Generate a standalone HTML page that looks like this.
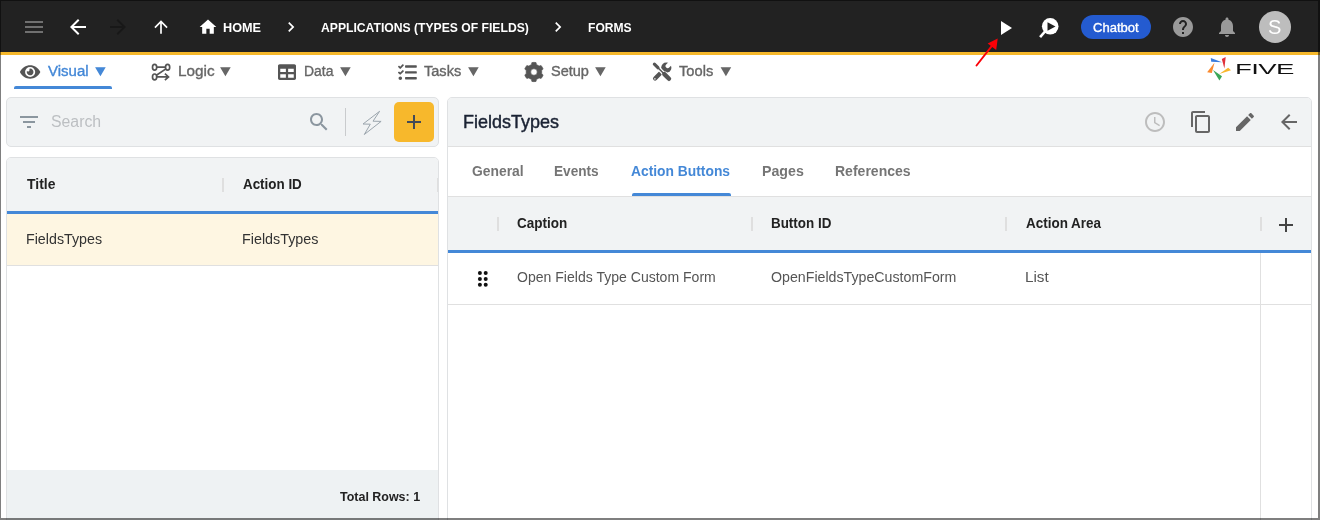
<!DOCTYPE html>
<html lang="en"><head><meta charset="utf-8"><title>Five - Forms</title>
<style>
html,body{margin:0;padding:0;background:#fff;}
body{width:1320px;height:520px;overflow:hidden;font-family:"Liberation Sans",Arial,sans-serif;}
#app{position:relative;width:1320px;height:520px;overflow:hidden;background:#fff;}
#app *{box-sizing:border-box;}
.a{position:absolute;}
.t{position:absolute;line-height:1;white-space:nowrap;transform-origin:0 0;}
svg{position:absolute;overflow:visible;}
#hdr{left:0;top:0;width:1320px;height:52px;background:#222;}
#ybar{left:0;top:52px;width:1320px;height:3px;background:#f6b82b;}
#frame{position:absolute;left:0;top:0;width:1320px;height:520px;border-style:solid;border-color:rgba(0,0,0,.5);border-width:1px 2px 2px 1px;pointer-events:none;}
.tri{position:absolute;line-height:1;font-size:18px;transform-origin:0 100%;transform:scaleY(.86);}
.ul{position:absolute;height:3px;background:#4488d7;border-radius:2px 2px 0 0;}
.panel{position:absolute;background:#f1f3f4;border:1px solid #dfe1e3;}
.sep{position:absolute;width:2px;height:14px;background:#dfdfdf;}
.hl{position:absolute;height:1px;background:#e0e0e0;}
.vl{position:absolute;width:1px;background:#e0e0e0;}
.bl{position:absolute;height:3px;background:#4488d7;}

</style></head>
<body>
<div id="app">
<header>
<div id="hdr" class="a"></div>
<div id="ybar" class="a"></div>

<!-- header icons -->
<svg style="left:22px;top:15px" width="24" height="24" viewBox="0 0 24 24"><path fill="#707070" d="M3 18h18v-2H3v2zm0-5h18v-2H3v2zm0-7v2h18V6H3z"/></svg>
<svg style="left:66px;top:15px" width="24" height="24" viewBox="0 0 24 24"><path fill="#fff" d="M20 11H7.830l5.590-5.590L12 4l-8 8 8 8 1.410-1.410L7.830 13H20v-2z"/></svg>
<svg style="left:106px;top:15px" width="24" height="24" viewBox="0 0 24 24"><path fill="#181818" d="M12 4l-1.410 1.410L16.170 11H4v2h12.170l-5.580 5.590L12 20l8-8z"/></svg>
<svg style="left:151px;top:17px" width="20" height="20" viewBox="0 0 24 24"><path fill="#fff" d="M4 12l1.410 1.410L11 7.830V20h2V7.830l5.580 5.590L20 12l-8-8-8 8z"/></svg>
<svg style="left:198px;top:17px" width="20" height="20" viewBox="0 0 24 24"><path fill="#fff" d="M10 20v-6h4v6h5v-8h3L12 3 2 12h3v8z"/></svg>
<svg style="left:281px;top:17px" width="20" height="20" viewBox="0 0 24 24"><path fill="#fff" d="M10 6L8.590 7.410 13.170 12l-4.580 4.590L10 18l6-6z"/></svg>
<svg style="left:548px;top:17px" width="20" height="20" viewBox="0 0 24 24"><path fill="#fff" d="M10 6L8.590 7.410 13.170 12l-4.580 4.590L10 18l6-6z"/></svg>
<svg style="left:993px;top:16px" width="24" height="24" viewBox="0 0 24 24"><path fill="#fff" d="M8 5v14l11-7z"/></svg>
<!-- preview icon -->
<svg style="left:1036px;top:14px" width="28" height="28" viewBox="0 0 28 28"><path d="M9 17.500L4.100 23.100" stroke="#fff" stroke-width="2.600" stroke-linecap="butt"/><circle cx="14.200" cy="12.300" r="8.300" fill="#fff"/><path d="M11.500 8.300v8.400l8-4.200z" fill="#222"/></svg>
<div class="a" style="left:1081px;top:15px;width:70px;height:24px;border-radius:12px;background:#245bd0;"></div>
<svg style="left:1171px;top:15px" width="24" height="24" viewBox="0 0 24 24"><path fill="#9a9a9a" d="M12 2C6.480 2 2 6.480 2 12s4.480 10 10 10 10-4.480 10-10S17.520 2 12 2zm1 17h-2v-2h2v2zm2.070-7.750l-.9.920C13.450 12.900 13 13.500 13 15h-2v-.5c0-1.100.45-2.100 1.170-2.830l1.240-1.260c.37-.36.590-.86.590-1.410 0-1.100-.9-2-2-2s-2 .9-2 2H8c0-2.210 1.790-4 4-4s4 1.790 4 4c0 .88-.36 1.680-.93 2.250z"/></svg>
<svg style="left:1215px;top:15px" width="24" height="24" viewBox="0 0 24 24"><path fill="#9a9a9a" d="M12 22c1.100 0 2-.9 2-2h-4c0 1.100.89 2 2 2zm6-6v-5c0-3.070-1.640-5.640-4.500-6.320V4c0-.83-.67-1.500-1.500-1.500s-1.500.67-1.500 1.500v.68C7.630 5.360 6 7.920 6 11v5l-2 2v1h16v-1l-2-2z"/></svg>
<div class="a" style="left:1259px;top:11px;width:32px;height:32px;border-radius:16px;background:#bdbdbd;"></div>
<!-- red arrow -->
<svg style="left:960px;top:30px" width="60" height="45" viewBox="960 30 60 45"><path d="M976.500 65.500L992.500 45.200" stroke="#fb0007" stroke-width="1.900" stroke-linecap="round"/><path d="M997.700 38.600L987.700 43.400L996.200 50.100z" fill="#fb0007"/></svg>

<span id="t_home" class="t" style="left:222.71px;top:21.00px;font-size:13px;font-weight:700;color:#fff;transform:scaleX(0.9745);">HOME</span>
<span id="t_app" class="t" style="left:320.91px;top:21.00px;font-size:13px;font-weight:700;color:#fff;transform:scaleX(0.9353);">APPLICATIONS (TYPES OF FIELDS)</span>
<span id="t_forms" class="t" style="left:587.81px;top:21.00px;font-size:13px;font-weight:700;color:#fff;transform:scaleX(0.9303);">FORMS</span>
<span id="t_chat" class="t" style="left:1093.09px;top:20.75px;font-size:13px;font-weight:400;color:#fff;transform:scaleX(1.0026);-webkit-text-stroke:0.35px;">Chatbot</span>
<span id="t_s" class="t" style="left:1268.37px;top:16.86px;font-size:20px;font-weight:400;color:#fff;transform:scaleX(1.0040);">S</span>
</header>
<nav>
<!-- nav icons -->
<svg style="left:20.300px;top:63px" width="20.250" height="18" viewBox="0 0 576 512"><path fill="#555" d="M572.520 241.400C518.290 135.590 410.930 64 288 64S57.680 135.640 3.480 241.410a32.350 32.350 0 0 0 0 29.190C57.710 376.410 165.070 448 288 448s230.320-71.640 284.520-177.410a32.350 32.350 0 0 0 0-29.190zM288 400a144 144 0 1 1 144-144 143.930 143.930 0 0 1-144 144zm0-240a95.310 95.310 0 0 0-25.310 3.790 47.850 47.850 0 0 1-66.900 66.900A95.780 95.780 0 1 0 288 160z"/></svg>
<svg style="left:150px;top:62px" width="22" height="20" viewBox="150 62 22 20" fill="none" stroke="#555" stroke-width="1.700"><ellipse cx="154.600" cy="67.200" rx="2.100" ry="2.900"/><ellipse cx="167.600" cy="67.200" rx="2.100" ry="2.900"/><ellipse cx="154.600" cy="76.900" rx="2.100" ry="2.900"/><path d="M156.700 67.200H165.500M165.900 68.900L156.400 75.300M156.700 76.900H168M164.900 73.700L168.500 76.900L164.900 80.100" stroke-linejoin="miter"/></svg>
<svg style="left:278px;top:63px" width="18" height="18" viewBox="0 0 512 512"><path fill="#555" d="M464 32H48C21.490 32 0 53.490 0 80v352c0 26.510 21.490 48 48 48h416c26.510 0 48-21.490 48-48V80c0-26.510-21.490-48-48-48zM224 416H64v-96h160v96zm0-160H64v-96h160v96zm224 160H288v-96h160v96zm0-160H288v-96h160v96z"/></svg>
<svg style="left:397.700px;top:62.600px" width="18.800" height="18.800" viewBox="0 0 512 512"><path fill="#555" d="M139.610 35.500a12 12 0 0 0-17 0L58.930 98.810l-22.700-22.120a12 12 0 0 0-17 0L3.530 92.410a12 12 0 0 0 0 17l47.590 47.400a12.780 12.780 0 0 0 17.610 0l15.590-15.620L156.520 69a12.090 12.090 0 0 0 .09-17zm0 159.190a12 12 0 0 0-17 0l-63.680 63.720-22.700-22.100a12 12 0 0 0-17 0L3.530 252a12 12 0 0 0 0 17L51 316.500a12.770 12.770 0 0 0 17.600 0l15.700-15.690 72.200-72.220a12 12 0 0 0 .09-16.900zM64 368c-26.490 0-48.590 21.500-48.590 48S37.530 464 64 464a48 48 0 0 0 0-96zm432 16H208a16 16 0 0 0-16 16v32a16 16 0 0 0 16 16h288a16 16 0 0 0 16-16v-32a16 16 0 0 0-16-16zm0-320H208a16 16 0 0 0-16 16v32a16 16 0 0 0 16 16h288a16 16 0 0 0 16-16V80a16 16 0 0 0-16-16zm0 160H208a16 16 0 0 0-16 16v32a16 16 0 0 0 16 16h288a16 16 0 0 0 16-16v-32a16 16 0 0 0-16-16z"/></svg>
<svg style="left:522px;top:60px" width="24" height="24" viewBox="522 60 24 24"><path fill="#555" fill-rule="evenodd" stroke="#555" stroke-width="0.600" stroke-linejoin="round" d="M536.55 64.65L536.04 62.58A9.65 9.65 0 0 0 531.86 62.58L531.35 64.65A7.8 7.8 0 0 0 528.88 66.07L526.84 65.48A9.65 9.65 0 0 0 524.75 69.10L526.28 70.58A7.8 7.8 0 0 0 526.28 73.42L524.75 74.90A9.65 9.65 0 0 0 526.84 78.52L528.88 77.93A7.8 7.8 0 0 0 531.35 79.35L531.86 81.42A9.65 9.65 0 0 0 536.04 81.42L536.55 79.35A7.8 7.8 0 0 0 539.02 77.93L541.06 78.52A9.65 9.65 0 0 0 543.15 74.90L541.62 73.42A7.8 7.8 0 0 0 541.62 70.58L543.15 69.10A9.65 9.65 0 0 0 541.06 65.48L539.02 66.07A7.8 7.8 0 0 0 536.55 64.65ZM530.70 72.00a3.25 3.25 0 1 0 6.5 0a3.25 3.25 0 1 0 -6.5 0Z"/></svg>
<svg style="left:648px;top:60px" width="28" height="24" viewBox="648 60 28 24"><defs><mask id="wm" maskUnits="userSpaceOnUse" x="648" y="60" width="28" height="24"><rect x="648" y="60" width="28" height="24" fill="#fff"/><path d="M667.700 66L673.500 60.200" stroke="#000" stroke-width="4.300" stroke-linecap="round" fill="none"/></mask></defs>
<g mask="url(#wm)"><circle cx="666.300" cy="67.700" r="5.100" fill="#555"/></g>
<path d="M665 68.700L660.200 73.400" stroke="#555" stroke-width="3" fill="none"/>
<path d="M660.300 73.300L655.100 78.500" stroke="#555" stroke-width="4.200" stroke-linecap="round" fill="none"/>
<circle cx="654.900" cy="78.800" r="0.900" fill="#d0d0d0"/>
<path d="M654.300 64.100L669 78.900" stroke="#fff" stroke-width="4" fill="none"/>
<path d="M665 74.900L669 78.900" stroke="#fff" stroke-width="6.400" stroke-linecap="round" fill="none"/>
<path d="M654.400 64.200L657.900 67.700" stroke="#555" stroke-width="3.200" stroke-linecap="round" fill="none"/>
<path d="M657.500 67.300L664 73.800" stroke="#555" stroke-width="1.500" fill="none"/>
<path d="M664.300 74.100L669 78.800" stroke="#555" stroke-width="4.400" stroke-linecap="round" fill="none"/>
</svg>

<!-- tri glyphs -->
<span class="tri" id="tri1" style="left:91.500px;top:61px;color:#4488d7">▼</span>
<span class="tri" id="tri2" style="left:216.500px;top:61px;color:#666">▼</span>
<span class="tri" id="tri3" style="left:336.500px;top:61px;color:#666">▼</span>
<span class="tri" id="tri4" style="left:464.500px;top:61px;color:#666">▼</span>
<span class="tri" id="tri5" style="left:591.500px;top:61px;color:#666">▼</span>
<span class="tri" id="tri6" style="left:717px;top:61px;color:#666">▼</span>
<div class="ul" style="left:14px;top:86px;width:98px;"></div>

<!-- logo -->
<svg style="left:1200px;top:54px" width="40" height="34" viewBox="1200 54 40 34"><path fill="#3b7ddd" d="M1210.800 57.900L1211.200 61.700L1222 62.300z"/><path fill="#e0303a" d="M1225.700 57.100L1221.800 58.900L1224.400 68.500z"/><path fill="#f8b62c" d="M1228.200 67.800L1231 70.300L1219.200 73.900z"/><path fill="#3aa757" d="M1213 70L1222 76.300L1219.400 80.600z"/><path fill="#fb8a2e" d="M1214.500 62.800L1207.100 72.200L1211.800 72.900z"/></svg>

<span id="t_visual" class="t" style="left:47.84px;top:63.86px;font-size:14px;font-weight:400;color:#4488d7;transform:scaleX(1.0712);-webkit-text-stroke:0.35px;">Visual</span>
<span id="t_logic" class="t" style="left:177.78px;top:63.86px;font-size:14px;font-weight:400;color:#666;transform:scaleX(1.0914);-webkit-text-stroke:0.35px;">Logic</span>
<span id="t_data" class="t" style="left:303.83px;top:63.86px;font-size:14px;font-weight:400;color:#666;transform:scaleX(0.9949);-webkit-text-stroke:0.35px;">Data</span>
<span id="t_tasks" class="t" style="left:423.54px;top:63.86px;font-size:14px;font-weight:400;color:#666;transform:scaleX(1.0394);-webkit-text-stroke:0.35px;">Tasks</span>
<span id="t_setup" class="t" style="left:551.36px;top:63.86px;font-size:14px;font-weight:400;color:#666;transform:scaleX(1.0362);-webkit-text-stroke:0.35px;">Setup</span>
<span id="t_tools" class="t" style="left:679.02px;top:63.86px;font-size:14px;font-weight:400;color:#666;transform:scaleX(1.0479);-webkit-text-stroke:0.35px;">Tools</span>
<span id="five" class="t" style="left:1234.96px;top:62.11px;font-size:14px;font-weight:400;color:#111;transform:scaleX(1.9692);letter-spacing:-0.3px;">FIVE</span>
</nav>
<aside>
<!-- left: search -->
<div class="panel" style="left:6px;top:97px;width:433px;height:50px;border-radius:5px;"></div>
<svg style="left:17px;top:110px" width="24" height="24" viewBox="0 0 24 24"><path fill="#8b969f" d="M10 18h4v-2h-4v2zM3 6v2h18V6H3zm3 7h12v-2H6v2z"/></svg>
<svg style="left:307px;top:110px" width="24" height="24" viewBox="0 0 24 24"><path fill="#8b969f" d="M15.500 14h-.79l-.28-.27C15.410 12.590 16 11.110 16 9.500 16 5.910 13.090 3 9.500 3S3 5.910 3 9.500 5.910 16 9.500 16c1.610 0 3.090-.59 4.230-1.570l.27.280v.79l5 4.990L20.490 19l-4.990-5zm-6 0C7.010 14 5 11.990 5 9.500S7.010 5 9.500 5 14 7.010 14 9.500 11.990 14 9.500 14z"/></svg>
<div class="a" style="left:345px;top:108px;width:1px;height:28px;background:#c9cbcd;"></div>
<svg style="left:360px;top:108px" width="24" height="30" viewBox="360 108 24 30"><path fill="none" stroke="#9ba5ad" stroke-width="1" stroke-linejoin="miter" d="M379.600 111.300L363 124L370.300 124.200L364.300 134.500L381.100 121.400L373 121.200z"/></svg>
<div class="a" style="left:394px;top:102px;width:40px;height:40px;border-radius:5px;background:#f7b82c;"></div>
<svg style="left:402px;top:110px" width="24" height="24" viewBox="0 0 24 24"><path fill="#434a57" d="M19 13h-6v6h-2v-6H5v-2h6V5h2v6h6v2z"/></svg>

<!-- left: table -->
<div class="panel" style="left:6px;top:157px;width:433px;height:370px;border-radius:5px 5px 0 0;background:#fff;"></div>
<div class="a" style="left:7px;top:158px;width:431px;height:53px;background:#f1f3f4;border-radius:4px 4px 0 0;"></div>
<div class="bl" style="left:7px;top:211px;width:431px;"></div>
<div class="a" style="left:7px;top:214px;width:431px;height:51px;background:#fef6e2;"></div>
<div class="hl" style="left:7px;top:265px;width:431px;"></div>
<div class="a" style="left:7px;top:470px;width:431px;height:50px;background:#eef2f3;"></div>
<div class="sep" style="left:222px;top:178px;"></div>
<div class="sep" style="left:437px;top:178px;width:1px;"></div>

<span id="t_search" class="t" style="left:51.10px;top:114.44px;font-size:16px;font-weight:400;color:#bcbfc2;transform:scaleX(0.9896);">Search</span>
<span id="t_title" class="t" style="left:26.69px;top:177.11px;font-size:14px;font-weight:700;color:#222;transform:scaleX(0.9948);">Title</span>
<span id="t_actid" class="t" style="left:242.60px;top:177.11px;font-size:14px;font-weight:700;color:#222;transform:scaleX(0.9568);">Action ID</span>
<span id="t_ft1" class="t" style="left:25.97px;top:231.92px;font-size:14px;font-weight:400;color:#333;transform:scaleX(1.0176);">FieldsTypes</span>
<span id="t_ft2" class="t" style="left:242.43px;top:231.92px;font-size:14px;font-weight:400;color:#333;transform:scaleX(1.0233);">FieldsTypes</span>
<span id="t_total" class="t" style="left:340.46px;top:490.18px;font-size:13px;font-weight:700;color:#222;transform:scaleX(0.9587);">Total Rows: 1</span>
</aside>
<main>
<!-- right panel -->
<div class="panel" style="left:447px;top:97px;width:865px;height:430px;border-radius:5px 5px 0 0;background:#fff;"></div>
<div class="a" style="left:448px;top:98px;width:863px;height:48px;background:#f1f3f4;border-radius:4px 4px 0 0;"></div>
<div class="hl" style="left:448px;top:146px;width:863px;"></div>
<svg style="left:1143px;top:110px" width="24" height="24" viewBox="0 0 24 24"><path fill="#bdbdbd" d="M11.990 2C6.470 2 2 6.480 2 12s4.470 10 9.990 10C17.520 22 22 17.520 22 12S17.520 2 11.990 2zM12 20c-4.420 0-8-3.580-8-8s3.580-8 8-8 8 3.580 8 8-3.580 8-8 8zm.5-13H11v6l5.250 3.150.75-1.230-4.500-2.670z"/></svg>
<svg style="left:1189px;top:110px" width="24" height="24" viewBox="0 0 24 24"><path fill="#666" d="M16 1H4c-1.100 0-2 .9-2 2v14h2V3h12V1zm3 4H8c-1.100 0-2 .9-2 2v14c0 1.100.9 2 2 2h11c1.100 0 2-.9 2-2V7c0-1.100-.9-2-2-2zm0 16H8V7h11v14z"/></svg>
<svg style="left:1233px;top:110px" width="24" height="24" viewBox="0 0 24 24"><path fill="#666" d="M3 17.250V21h3.750L17.810 9.940l-3.750-3.750L3 17.250zM20.710 7.040c.39-.39.39-1.020 0-1.410l-2.340-2.340c-.39-.39-1.020-.39-1.410 0l-1.830 1.830 3.750 3.750 1.830-1.830z"/></svg>
<svg style="left:1277px;top:110px" width="24" height="24" viewBox="0 0 24 24"><path fill="#666" d="M20 11H7.830l5.590-5.590L12 4l-8 8 8 8 1.410-1.410L7.830 13H20v-2z"/></svg>

<div class="ul" style="left:631.500px;top:193px;width:99.500px;"></div>
<div class="a" style="left:448px;top:196px;width:863px;height:54px;background:#f1f3f4;border-top:1px solid #e0e0e0;"></div>
<div class="bl" style="left:448px;top:250px;width:863px;"></div>
<div class="hl" style="left:448px;top:304px;width:863px;"></div>
<div class="vl" style="left:1260px;top:253px;height:267px;"></div>
<div class="sep" style="left:497px;top:217px;"></div>
<div class="sep" style="left:751px;top:217px;"></div>
<div class="sep" style="left:1005px;top:217px;"></div>
<div class="sep" style="left:1260px;top:217px;"></div>
<svg style="left:1274px;top:213px" width="24" height="24" viewBox="0 0 24 24"><path fill="#444" d="M19 13h-6v6h-2v-6H5v-2h6V5h2v6h6v2z"/></svg>
<svg style="left:476px;top:269px" width="14" height="20" viewBox="476 269 14 20" fill="#111"><circle cx="479.900" cy="273.100" r="2"/><circle cx="485.700" cy="273.100" r="2"/><circle cx="479.900" cy="278.900" r="2"/><circle cx="485.700" cy="278.900" r="2"/><circle cx="479.900" cy="284.700" r="2"/><circle cx="485.700" cy="284.700" r="2"/></svg>
<span id="t_fthead" class="t" style="left:462.92px;top:113.08px;font-size:18.5px;font-weight:400;color:#1a2233;transform:scaleX(0.9720);-webkit-text-stroke:0.45px;">FieldsTypes</span>
<span id="t_general" class="t" style="left:471.96px;top:164.11px;font-size:14px;font-weight:700;color:#757575;transform:scaleX(0.9901);">General</span>
<span id="t_events" class="t" style="left:554.28px;top:164.11px;font-size:14px;font-weight:700;color:#757575;transform:scaleX(0.9714);">Events</span>
<span id="t_ab" class="t" style="left:630.99px;top:164.11px;font-size:14px;font-weight:700;color:#4488d7;transform:scaleX(0.9872);">Action Buttons</span>
<span id="t_pages" class="t" style="left:762.40px;top:164.11px;font-size:14px;font-weight:700;color:#757575;transform:scaleX(1.0129);">Pages</span>
<span id="t_refs" class="t" style="left:834.94px;top:164.11px;font-size:14px;font-weight:700;color:#757575;transform:scaleX(1.0014);">References</span>
<span id="t_caption" class="t" style="left:517.42px;top:216.11px;font-size:14px;font-weight:700;color:#222;transform:scaleX(0.9643);">Caption</span>
<span id="t_btnid" class="t" style="left:771.42px;top:216.11px;font-size:14px;font-weight:700;color:#222;transform:scaleX(0.9578);">Button ID</span>
<span id="t_area" class="t" style="left:1025.70px;top:216.11px;font-size:14px;font-weight:700;color:#222;transform:scaleX(0.9611);">Action Area</span>
<span id="t_r1" class="t" style="left:516.95px;top:270.11px;font-size:14px;font-weight:400;color:#555;transform:scaleX(1.0033);">Open Fields Type Custom Form</span>
<span id="t_r2" class="t" style="left:770.90px;top:270.11px;font-size:14px;font-weight:400;color:#555;transform:scaleX(1.0138);">OpenFieldsTypeCustomForm</span>
<span id="t_r3" class="t" style="left:1025.30px;top:270.11px;font-size:14px;font-weight:400;color:#555;transform:scaleX(1.0889);">List</span>
</main>

<div id="frame"></div>
</div>
</body></html>
